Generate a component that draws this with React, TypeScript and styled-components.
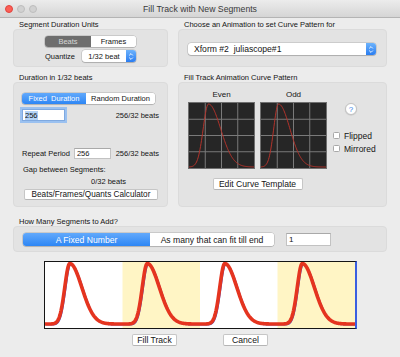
import React from "react";
import styled, { createGlobalStyle } from "styled-components";

const GlobalStyle = createGlobalStyle`
  * { box-sizing: border-box; }
  body {
    margin: 0;
    font-family: "Liberation Sans", Arial, sans-serif;
    color: #141414;
  }
`;

const Window = styled("div")`
  width: 400px;
  height: 357px;
  background: #ececec;
  overflow: hidden;
`;

const TitleBar = styled("div")`
  height: 18px;
  display: grid;
  grid-template-columns: 1fr auto 1fr;
  align-items: center;
  background: linear-gradient(#ececec, #d5d5d5);
  border-bottom: 1px solid #b4b4b4;
`;

const Lights = styled("div")`
  display: flex;
  gap: 4px;
  padding-left: 5px;
`;

const Light = styled("span")<{ $red?: boolean }>`
  width: 8px;
  height: 8px;
  border-radius: 50%;
  background: ${(p) => (p.$red ? "#fc5f57" : "#d1d1d1")};
  border: 0.5px solid ${(p) => (p.$red ? "#e0443e" : "#bdbdbd")};
`;

const Title = styled("span")`
  font-size: 8.7px;
  color: #3a3a3a;
`;

const Content = styled("div")`
  padding: 1px 13px 0;
`;

const Columns = styled("div")<{ $mt: number }>`
  display: grid;
  grid-template-columns: 155px 209px;
  column-gap: 10px;
  margin-top: ${(p) => p.$mt}px;
`;

const SectionLabel = styled("div")`
  height: 9px;
  line-height: 9px;
  font-size: 7.5px;
  padding-left: 6px;
  white-space: nowrap;
`;

const GroupBox = styled("div")<{ $h: number }>`
  height: ${(p) => p.$h}px;
  background: #e3e3e3;
  border: 1px solid #dbdbdb;
  border-radius: 4px;
`;

const UnitsBox = styled(GroupBox)`
  display: flex;
  flex-direction: column;
  align-items: center;
  padding-top: 6px;
`;

const AnimBox = styled(GroupBox)`
  padding: 13px 0 0 9px;
`;

const DurationBox = styled(GroupBox)`
  padding: 10px 8px 0 8px;
  display: flex;
  flex-direction: column;
`;

const CurveBox = styled(GroupBox)`
  padding: 7px 0 0 9px;
  display: flex;
`;

const CountBox = styled(GroupBox)`
  padding: 6px 0 0 9px;
  display: flex;
  align-items: flex-start;
`;

const Segmented = styled("div")<{ $w: number; $h: number }>`
  width: ${(p) => p.$w}px;
  height: ${(p) => p.$h}px;
  display: flex;
  border-radius: 3px;
  background: #ffffff;
  overflow: hidden;
  box-shadow: 0 0 0 0.5px rgba(0, 0, 0, 0.22), 0 1px 1px rgba(0, 0, 0, 0.12);
`;

const Segment = styled("div")<{ $w: number; $fs: number; $sel?: "gray" | "blue" }>`
  width: ${(p) => p.$w}px;
  display: flex;
  align-items: center;
  justify-content: center;
  font-size: ${(p) => p.$fs}px;
  white-space: pre;
  background: ${(p) =>
    p.$sel === "gray"
      ? "#6e6e6e"
      : p.$sel === "blue"
      ? "linear-gradient(#62a9fb, #2d86f5)"
      : "#ffffff"};
  color: ${(p) => (p.$sel === "gray" ? "#d6d6d6" : p.$sel ? "#ffffff" : "#141414")};
`;

const QuantRow = styled("div")`
  width: 91px;
  margin-top: 3px;
  display: flex;
  align-items: center;
  justify-content: space-between;
  font-size: 7.5px;
`;

const Popup = styled("div")<{ $w: number; $fs: number }>`
  width: ${(p) => p.$w}px;
  height: 12px;
  display: flex;
  align-items: center;
  background: #ffffff;
  border-radius: 3px;
  font-size: ${(p) => p.$fs}px;
  white-space: pre;
  box-shadow: 0 0 0 0.5px rgba(0, 0, 0, 0.2), 0 1px 1px rgba(0, 0, 0, 0.15);
`;

const PopupText = styled("span")<{ $center?: boolean }>`
  flex: 1;
  padding-left: ${(p) => (p.$center ? 0 : 6)}px;
  text-align: ${(p) => (p.$center ? "center" : "left")};
`;

const Stepper = styled("span")`
  width: 10px;
  height: 100%;
  display: flex;
  align-items: center;
  justify-content: center;
  border-radius: 0 3px 3px 0;
  background: linear-gradient(#6db3fc, #2a7df1);
`;

const FieldRow = styled("div")<{ $mt: number }>`
  display: flex;
  align-items: center;
  margin-top: ${(p) => p.$mt}px;
  font-size: 7.5px;
  white-space: nowrap;
`;

const TextField = styled("div")<{ $w: number; $h: number; $ml?: number; $focus?: boolean; $fs?: number }>`
  width: ${(p) => p.$w}px;
  height: ${(p) => p.$h}px;
  margin-left: ${(p) => p.$ml ?? 0}px;
  display: flex;
  align-items: center;
  padding-left: 2px;
  font-size: ${(p) => p.$fs ?? 7.5}px;
  background: #ffffff;
  border: 1px solid ${(p) => (p.$focus ? "#7fa9e0" : "#c2c2c2")};
  border-top-color: ${(p) => (p.$focus ? "#7fa9e0" : "#a9a9a9")};
  box-shadow: ${(p) => (p.$focus ? "0 0 0 2px #9bc1f0" : "none")};
`;

const Selected = styled("span")`
  background: #b3d3f7;
`;

const Value = styled("span")`
  margin-left: auto;
`;

const PlainLine = styled("div")<{ $mt: number; $pl: number }>`
  margin-top: ${(p) => p.$mt}px;
  padding-left: ${(p) => p.$pl}px;
  height: 9px;
  line-height: 9px;
  font-size: 7.5px;
  white-space: nowrap;
`;

const PushButton = styled("div")<{ $w: number; $h: number; $fs: number }>`
  width: ${(p) => p.$w}px;
  height: ${(p) => p.$h}px;
  display: flex;
  align-items: center;
  justify-content: center;
  font-size: ${(p) => p.$fs}px;
  white-space: nowrap;
  background: #ffffff;
  border: 1px solid #c6c6c6;
  border-bottom-color: #b5b5b5;
  border-radius: 2px;
`;

const CalcButton = styled(PushButton)`
  margin: 3px 0 0 2px;
`;

const GraphsColumn = styled("div")`
  width: 139px;
  display: flex;
  flex-direction: column;
  align-items: center;
`;

const GraphsRow = styled("div")`
  display: flex;
  gap: 5px;
`;

const GraphBlock = styled("div")`
  display: flex;
  flex-direction: column;
  align-items: center;
`;

const GraphLabel = styled("div")`
  height: 10px;
  line-height: 10px;
  font-size: 8px;
  margin-bottom: 2px;
`;

const Graph = styled("div")`
  width: 67px;
  height: 67px;
  background: #262626;
  border: 1px solid #6f6f6f;
  display: flex;
`;

const TemplateButton = styled(PushButton)`
  margin-top: 9px;
`;

const SideColumn = styled("div")`
  margin-left: 6px;
  display: flex;
  flex-direction: column;
`;

const HelpButton = styled("div")`
  width: 12px;
  height: 12px;
  margin: 13px 0 0 12px;
  border-radius: 50%;
  background: #ffffff;
  border: 0.5px solid #c2c2c2;
  box-shadow: 0 0.5px 1px rgba(0, 0, 0, 0.15);
  display: flex;
  align-items: center;
  justify-content: center;
  font-size: 8px;
  color: #2f7fe8;
`;

const CheckRow = styled("div")<{ $mt: number }>`
  margin-top: ${(p) => p.$mt}px;
  display: flex;
  align-items: center;
  height: 7px;
  font-size: 8.5px;
  white-space: nowrap;
`;

const CheckBox = styled("span")`
  width: 7px;
  height: 7px;
  margin-right: 4px;
  background: #ffffff;
  border: 0.5px solid #a8a8a8;
  border-radius: 1.5px;
`;

const PreviewRow = styled("div")`
  display: flex;
  justify-content: center;
  margin-top: 9px;
`;

const Preview = styled("div")`
  width: 313px;
  height: 68px;
  background: #ffffff;
  border: 1px solid #151515;
  border-right: 2px solid #3b5fe0;
  display: flex;
`;

const ButtonRow = styled("div")`
  display: flex;
  justify-content: center;
  gap: 46px;
  margin-top: 5px;
`;

// skewed bell: steeper gaussian on the rising side, wider one on the falling side
const pulse = (t: number, tp: number, sr: number, sd: number) => {
  const d = t - tp;
  const s = d < 0 ? sr : sd;
  return Math.exp(-(d * d) / (2 * s * s));
};

const previewPath = (dx: number, dy: number) => {
  const seg = 77.5;
  let d = "";
  for (let x = 0; x <= 310; x += 0.5) {
    const t = (x % seg) / seg;
    const y = 62 - pulse(t, 0.32, 0.065, 0.155) * 60.5;
    d += `${d ? "L" : "M"}${(x + dx).toFixed(2)} ${(y + dy).toFixed(2)}`;
  }
  return d;
};

const graphPath = (tp: number, sr: number, sd: number) => {
  let d = "";
  for (let x = 0; x <= 65; x += 0.5) {
    const y = 64 - pulse(x / 65, tp, sr, sd) * 63;
    d += `${d ? "L" : "M"}${x.toFixed(2)} ${y.toFixed(2)}`;
  }
  return d;
};

function StepperIcon() {
  return (
    <svg width="6" height="9" viewBox="0 0 6 9">
      <path d="M1.2 3.4 L3 1.6 L4.8 3.4 M1.2 5.6 L3 7.4 L4.8 5.6" fill="none" stroke="#fff" strokeWidth="0.9" />
    </svg>
  );
}

function CurveGraph({ tp, sr, sd }: { tp: number; sr: number; sd: number }) {
  const lines = [16.25, 32.5, 48.75];
  return (
    <svg width="65" height="65" viewBox="0 0 65 65">
      {lines.map((v) => (
        <g key={v} stroke="#7a7a7a" strokeWidth="1">
          <line x1={v} y1={0} x2={v} y2={65} />
          <line x1={0} y1={v} x2={65} y2={v} />
        </g>
      ))}
      <path d={graphPath(tp, sr, sd)} fill="none" stroke="#b3332b" strokeWidth="1" />
    </svg>
  );
}

function PreviewStrip() {
  return (
    <svg width="310" height="66" viewBox="0 0 310 66">
      <rect x="77.5" y="0" width="77.5" height="66" fill="#fff5c5" />
      <rect x="232.5" y="0" width="77.5" height="66" fill="#fff5c5" />
      <path d={previewPath(1, 0.8)} fill="none" stroke="#4a4fc8" strokeWidth="1.6" />
      <path d={previewPath(0, 0)} fill="none" stroke="#e5341f" strokeWidth="3.6" strokeLinejoin="round" />
    </svg>
  );
}

export default function App() {
  return (
    <Window>
      <GlobalStyle />
      <TitleBar>
        <Lights>
          <Light $red />
          <Light />
          <Light />
        </Lights>
        <Title>Fill Track with New Segments</Title>
        <span />
      </TitleBar>
      <Content>
        <Columns $mt={1}>
          <div>
            <SectionLabel>Segment Duration Units</SectionLabel>
            <UnitsBox $h={38}>
              <Segmented $w={91} $h={11}>
                <Segment $w={46} $fs={7.5} $sel="gray">Beats</Segment>
                <Segment $w={45} $fs={7.5}>Frames</Segment>
              </Segmented>
              <QuantRow>
                <span>Quantize</span>
                <Popup $w={54} $fs={7.5}>
                  <PopupText $center>1/32 beat</PopupText>
                  <Stepper>
                    <StepperIcon />
                  </Stepper>
                </Popup>
              </QuantRow>
            </UnitsBox>
          </div>
          <div>
            <SectionLabel>Choose an Animation to set Curve Pattern for</SectionLabel>
            <AnimBox $h={38}>
              <Popup $w={188} $fs={8.6}>
                <PopupText>{"Xform #2  juliascope#1"}</PopupText>
                <Stepper>
                  <StepperIcon />
                </Stepper>
              </Popup>
            </AnimBox>
          </div>
        </Columns>

        <Columns $mt={6}>
          <div>
            <SectionLabel>Duration in 1/32 beats</SectionLabel>
            <DurationBox $h={125}>
              <Segmented $w={133} $h={11}>
                <Segment $w={64} $fs={7.5} $sel="blue">{"Fixed  Duration"}</Segment>
                <Segment $w={69} $fs={7.5}>Random Duration</Segment>
              </Segmented>
              <FieldRow $mt={5}>
                <TextField $w={43} $h={12} $focus>
                  <Selected>256</Selected>
                </TextField>
                <Value>256/32 beats</Value>
              </FieldRow>
              <FieldRow $mt={27}>
                <span>Repeat Period</span>
                <TextField $w={37} $h={11} $ml={4}>
                  256
                </TextField>
                <Value>256/32 beats</Value>
              </FieldRow>
              <PlainLine $mt={6} $pl={1}>
                Gap between Segments:
              </PlainLine>
              <PlainLine $mt={3} $pl={69}>
                0/32 beats
              </PlainLine>
              <CalcButton $w={134} $h={11} $fs={8.2}>
                Beats/Frames/Quants Calculator
              </CalcButton>
            </DurationBox>
          </div>
          <div>
            <SectionLabel>Fill Track Animation Curve Pattern</SectionLabel>
            <CurveBox $h={125}>
              <GraphsColumn>
                <GraphsRow>
                  <GraphBlock>
                    <GraphLabel>Even</GraphLabel>
                    <Graph>
                      <CurveGraph tp={0.3} sr={0.082} sd={0.187} />
                    </Graph>
                  </GraphBlock>
                  <GraphBlock>
                    <GraphLabel>Odd</GraphLabel>
                    <Graph>
                      <CurveGraph tp={0.27} sr={0.075} sd={0.175} />
                    </Graph>
                  </GraphBlock>
                </GraphsRow>
                <TemplateButton $w={90} $h={12} $fs={8.6}>
                  Edit Curve Template
                </TemplateButton>
              </GraphsColumn>
              <SideColumn>
                <HelpButton>?</HelpButton>
                <CheckRow $mt={17}>
                  <CheckBox />
                  Flipped
                </CheckRow>
                <CheckRow $mt={6}>
                  <CheckBox />
                  Mirrored
                </CheckRow>
              </SideColumn>
            </CurveBox>
          </div>
        </Columns>

        <div style={{ marginTop: 10 }}>
          <SectionLabel>How Many Segments to Add?</SectionLabel>
          <CountBox $h={26}>
            <Segmented $w={251} $h={13}>
              <Segment $w={127} $fs={8.6} $sel="blue">A Fixed Number</Segment>
              <Segment $w={124} $fs={8.6}>As many that can fit till end</Segment>
            </Segmented>
            <TextField $w={45} $h={13} $ml={12} $fs={8}>
              1
            </TextField>
          </CountBox>
        </div>

        <PreviewRow>
          <Preview>
            <PreviewStrip />
          </Preview>
        </PreviewRow>

        <ButtonRow>
          <PushButton $w={45} $h={12} $fs={8.6}>
            Fill Track
          </PushButton>
          <PushButton $w={45} $h={12} $fs={8.6}>
            Cancel
          </PushButton>
        </ButtonRow>
      </Content>
    </Window>
  );
}
